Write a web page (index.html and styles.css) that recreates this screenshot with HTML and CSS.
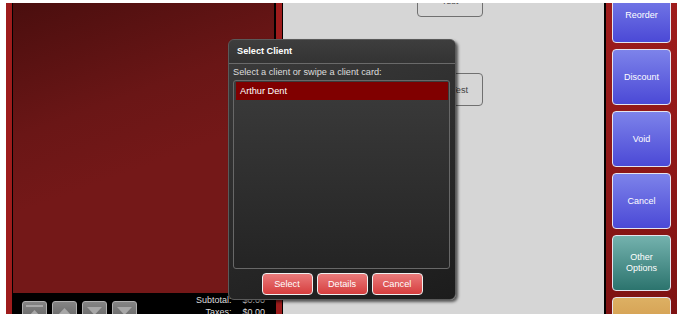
FILE: index.html
```html
<!DOCTYPE html>
<html lang="en">
<head>
  <meta charset="UTF-8">
  <title>POS - Select Client</title>
  <link rel="stylesheet" href="styles.css">
</head>
<body>
  <div class="screen">
    <div class="ticket">
      <div class="ticket-inner">
        <div class="order"></div>
        <div class="totals">
          <div class="scroll-btns">
            <button class="scroll-btn">
              <svg width="23" height="23" viewBox="0 0 23 23"><rect x="3" y="3" width="17" height="2" fill="#a8a8a8"/><polygon points="4,16 11.5,8 19,16" fill="#a8a8a8"/></svg>
            </button>
            <button class="scroll-btn">
              <svg width="23" height="23" viewBox="0 0 23 23"><polygon points="4,14 11.5,6 19,14" fill="#a8a8a8"/></svg>
            </button>
            <button class="scroll-btn">
              <svg width="23" height="23" viewBox="0 0 23 23"><polygon points="4,5 11.5,13 19,5" fill="#a8a8a8"/></svg>
            </button>
            <button class="scroll-btn">
              <svg width="23" height="23" viewBox="0 0 23 23"><polygon points="4,5 11.5,13 19,5" fill="#a8a8a8"/><rect x="3" y="15" width="17" height="2" fill="#a8a8a8"/></svg>
            </button>
          </div>
          <div class="sums">
            <span class="label">Subtotal:</span><span>$0.00</span>
            <span class="label">Taxes:</span><span>$0.00</span>
          </div>
        </div>
      </div>
    </div>

    <div class="menu">
      <div class="menu-col">
        <button class="item-btn">Test</button>
        <button class="item-btn">Test Test</button>
      </div>
    </div>

    <div class="actions">
      <button class="act-btn blue">Reorder</button>
      <button class="act-btn blue">Discount</button>
      <button class="act-btn blue">Void</button>
      <button class="act-btn blue">Cancel</button>
      <button class="act-btn teal">Other<br>Options</button>
      <button class="act-btn orange"></button>
    </div>
  </div>

  <div class="dialog">
    <div class="dialog-title">Select Client</div>
    <div class="dialog-label">Select a client or swipe a client card:</div>
    <div class="client-list">
      <div class="client-row selected">Arthur Dent</div>
    </div>
    <div class="dialog-btns">
      <button class="red-btn">Select</button>
      <button class="red-btn">Details</button>
      <button class="red-btn">Cancel</button>
    </div>
  </div>
</body>
</html>
```

FILE: styles.css
```css
body {
  margin: 0;
  background: #fff;
  font-family: "Liberation Sans", Arial, sans-serif;
  overflow: hidden;
  height: 314px;
}
button {
  font-family: inherit;
  padding: 0;
  cursor: pointer;
}
.screen {
  display: flex;
  margin: 3px 0 0 6px;
  height: 311px;
  overflow: hidden;
}

/* ticket */
.ticket {
  width: 264px;
  background: #9e1c1c;
  padding: 0 6px;
  border-right: 1px solid #000;
  display: flex;
}
.ticket-inner {
  flex: 1;
  display: flex;
  flex-direction: column;
  border-left: 1px solid #000;
  border-right: 2px solid #000;
}
.order {
  flex: none;
  height: 290px;
  background: linear-gradient(160deg, #4a0e0e 0%, #6a1616 35%, #741818 55%, #741818 100%);
}
.totals {
  flex: 1;
  background: #000;
  display: flex;
  justify-content: space-between;
}
.scroll-btns {
  display: flex;
  gap: 5px;
  padding: 8px 0 0 9px;
}
.scroll-btn {
  width: 25px;
  height: 25px;
  border: 1px solid #b0b0b0;
  border-radius: 3px;
  background: linear-gradient(#858585, #5c5c5c);
  display: flex;
  align-items: flex-start;
  justify-content: center;
}
.sums {
  display: grid;
  grid-template-columns: auto auto;
  column-gap: 11px;
  font-size: 9px;
  line-height: 12px;
  color: #ddd;
  padding: 1px 9px 0 0;
  align-content: start;
}
.sums .label {
  text-align: right;
}

/* menu */
.menu {
  width: 321px;
  background: #d6d6d6;
}
.menu-col {
  display: flex;
  flex-direction: column;
  gap: 56px;
  margin: -19px 0 0 134px;
}
.item-btn {
  width: 66px;
  height: 33px;
  border: 1px solid #707070;
  border-radius: 4px;
  background: transparent;
  color: #444;
  font-size: 9.2px;
}

/* actions */
.actions {
  width: 59px;
  background: linear-gradient(#9e1c1c, #7e1212);
  border-left: 2px solid #000;
  padding: 0 6px;
  display: flex;
  flex-direction: column;
  gap: 6px;
}
.act-btn {
  flex: none;
  height: 56px;
  border: 1px solid #e4e4ee;
  border-radius: 4px;
  color: #fff;
  font-size: 9px;
  line-height: 11px;
}
.act-btn:first-child {
  margin-top: -16px;
}
.blue {
  background: linear-gradient(#7d83ea, #4b49d6);
}
.teal {
  background: linear-gradient(#74b2ae, #2c746e);
}
.orange {
  background: linear-gradient(#ddb063, #c98b3b);
}

/* dialog */
.dialog {
  position: absolute;
  left: 228px;
  top: 39px;
  width: 226px;
  height: 259px;
  border: 1px solid #5a5a5a;
  border-radius: 6px;
  background: linear-gradient(160deg, #3c3c3c 0%, #2a2a2a 55%, #1c1c1c 100%);
  box-shadow: 2px 2px 3px rgba(0,0,0,0.6);
  display: flex;
  flex-direction: column;
  color: #fff;
}
.dialog-title {
  height: 23px;
  line-height: 23px;
  padding-left: 8px;
  font-size: 9.2px;
  font-weight: bold;
  border-bottom: 1px solid #6a6a6a;
  background: linear-gradient(#3e3e3e, #333);
  border-radius: 6px 6px 0 0;
}
.dialog-label {
  height: 16px;
  line-height: 16px;
  padding-left: 4px;
  font-size: 9.2px;
  color: #ddd;
}
.client-list {
  height: 185px;
  margin: 0 5px 0 4px;
  padding: 1px 1px 1px 2px;
  border: 1px solid #686868;
  border-radius: 3px;
  background: linear-gradient(#3b3b3b, #242424);
}
.client-row {
  height: 18px;
  line-height: 18px;
  padding-left: 4px;
  font-size: 9.2px;
}
.client-row.selected {
  background: #800000;
}
.dialog-btns {
  display: flex;
  justify-content: center;
  gap: 4px;
  margin-top: 4px;
}
.red-btn {
  width: 51px;
  height: 22px;
  border: 1px solid #f0f0f0;
  border-radius: 4px;
  background: linear-gradient(#ea7b7b, #d63e3e);
  color: #fff;
  font-size: 9.2px;
}
```
